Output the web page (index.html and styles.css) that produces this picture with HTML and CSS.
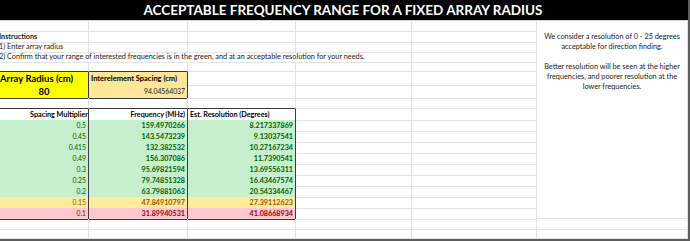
FILE: index.html
```html
<!DOCTYPE html>
<html>
<head>
<meta charset="utf-8">
<link rel="stylesheet" href="styles.css">
</head>
<body>
<div class="sheet">
  <div class="title">ACCEPTABLE FREQUENCY RANGE FOR A FIXED ARRAY RADIUS</div>
  <div class="body">
    <div class="left">
      <div class="row h11"><div class="c"></div><div class="c"></div><div class="c"></div><div class="c"></div><div class="c"></div></div>
      <div class="row h10"><div class="c txt b ind">Instructions</div><div class="c"></div><div class="c"></div><div class="c"></div><div class="c"></div></div>
      <div class="row h10"><div class="c txt ind">1) Enter array radius</div><div class="c"></div><div class="c"></div><div class="c"></div><div class="c"></div></div>
      <div class="row h10"><div class="c txt ind span4">2) Confirm that your range of interested frequencies is in the green, and at an acceptable resolution for your needs.</div><div class="c"></div></div>
      <div class="row h10"><div class="c bb"></div><div class="c bb"></div><div class="c"></div><div class="c"></div><div class="c"></div></div>
      <div class="row h13"><div class="c yel br radius-h">Array Radius (cm)</div><div class="c tan br inter-h">Interelement Spacing (cm)</div><div class="c"></div><div class="c"></div><div class="c"></div></div>
      <div class="row h13"><div class="c yel br bb radius-v">80</div><div class="c tan br bb inter-v">94.04564037</div><div class="c"></div><div class="c"></div><div class="c"></div></div>
      <div class="row h11"><div class="c bb"></div><div class="c bb"></div><div class="c bb"></div><div class="c"></div><div class="c"></div></div>
      <div class="row h11 head"><div class="c br num">Spacing Multiplier</div><div class="c br num">Frequency (MHz)</div><div class="c br lft">Est. Resolution (Degrees)</div><div class="c"></div><div class="c"></div></div>
      <div class="row h11 good"><div class="c br num n">0.5</div><div class="c br num">159.4970266</div><div class="c br num">8.217337869</div><div class="c"></div><div class="c"></div></div>
      <div class="row h11 good"><div class="c br num n">0.45</div><div class="c br num">143.5473239</div><div class="c br num">9.13037541</div><div class="c"></div><div class="c"></div></div>
      <div class="row h11 good"><div class="c br num n">0.415</div><div class="c br num">132.382532</div><div class="c br num">10.27167234</div><div class="c"></div><div class="c"></div></div>
      <div class="row h11 good"><div class="c br num n">0.49</div><div class="c br num">156.307086</div><div class="c br num">11.7390541</div><div class="c"></div><div class="c"></div></div>
      <div class="row h11 good"><div class="c br num n">0.3</div><div class="c br num">95.69821594</div><div class="c br num">13.69556311</div><div class="c"></div><div class="c"></div></div>
      <div class="row h11 good"><div class="c br num n">0.25</div><div class="c br num">79.74851328</div><div class="c br num">16.43467574</div><div class="c"></div><div class="c"></div></div>
      <div class="row h11 good"><div class="c br num n">0.2</div><div class="c br num">63.79881063</div><div class="c br num">20.54334467</div><div class="c"></div><div class="c"></div></div>
      <div class="row h11 warn"><div class="c br num n">0.15</div><div class="c br num">47.84910797</div><div class="c br num">27.39112623</div><div class="c"></div><div class="c"></div></div>
      <div class="row h11 bad"><div class="c br bb num n">0.1</div><div class="c br bb num">31.89940531</div><div class="c br bb num">41.08668934</div><div class="c"></div><div class="c"></div></div>
      <div class="row h11"><div class="c"></div><div class="c"></div><div class="c"></div><div class="c"></div><div class="c"></div></div>
      <div class="row h9"><div class="c"></div><div class="c"></div><div class="c"></div><div class="c"></div><div class="c"></div></div>
    </div>
    <div class="right">
      <div class="note">
        <p>We consider a resolution of 0 - 25 degrees<br>acceptable for direction finding.</p>
        <p>Better resolution will be seen at the higher<br>frequencies, and poorer resolution at the<br>lower frequencies.</p>
      </div>
      <div class="c h11"></div>
      <div class="c h9"></div>
    </div>
  </div>
</div>
</body>
</html>
```
FILE: styles.css
```css
* { box-sizing: border-box; }
html, body { margin: 0; padding: 0; background: #fff; }
body { font-family: "Lato", "Liberation Sans", sans-serif; color: #000; }

.sheet {
  width: 690px;
  border-right: 2px solid #5e5e5e;
  border-bottom: 2px solid #5e5e5e;
  overflow: hidden;
}
.title {
  height: 21px;
  background: #000;
  color: #fff;
  font-weight: 700;
  font-size: 13.5px;
  line-height: 21px;
  text-align: center;
  white-space: nowrap;
  border-bottom: 1px solid #d8d8d8;
  padding-right: 2px;
}
.body { display: flex; }
.left { width: 537px; display: flex; flex-direction: column; }
.right { width: 151px; display: flex; flex-direction: column; }

.row {
  display: grid;
  grid-template-columns: 89px 99px 108px 116px 125px;
}
.h9 { height: 9px; }
.h10 { height: 10px; }
.h11 { height: 11px; }
.h13 { height: 13px; }

.c {
  border-right: 1px solid #e3e3e3;
  border-bottom: 1px solid #e3e3e3;
  font-size: 7.2px;
  white-space: nowrap;
  overflow: visible;
  line-height: 10px;
}
.h11 > .c, .c.h11 { line-height: 11px; }
.h13 > .c { line-height: 13px; }
.txt { color: #1a1a1a; font-size: 7.3px; }
.txt.b { font-size: 7.2px; }
.b { font-weight: 700; }
.ind { padding-left: 0; margin-left: -1px; }
.span4 { grid-column: span 4; }

.c.br { border-right-color: #3c3c3c; }
.c.bb { border-bottom-color: #3c3c3c; }

.yel { background: #ffff00; }
.tan { background: #ffe699; }
.yel, .tan { border-bottom-color: transparent; }
.radius-h { font-size: 9.5px; font-weight: 700; padding-left: 0; }
.radius-v { font-size: 9.5px; font-weight: 700; text-align: center; }
.inter-h { font-size: 7.5px; font-weight: 700; padding-left: 2px; }
.inter-v { text-align: right; padding-right: 2px; color: #222; font-size: 6.8px; }

.head > .c { font-weight: 700; font-size: 7.2px; }
.num { text-align: right; padding-right: 2px; }
.head .num:first-child { padding-right: 0; }
.lft { text-align: left; padding-left: 2px; }

.good > .c:nth-child(-n+3) { background: #c6efce; border-bottom-color: transparent; color: #006100; font-weight: 700; }
.warn > .c:nth-child(-n+3) { background: #ffeb9c; border-bottom-color: transparent; color: #9c5700; font-weight: 700; }
.bad > .c:nth-child(-n+3) { background: #ffc7ce; color: #9c0006; font-weight: 700; }
.bad > .c.bb { border-bottom-color: #3c3c3c; }
.row > .c.n { font-weight: 400; font-size: 6.8px; }

.note {
  height: 198px;
  border-right: 1px solid #e3e3e3;
  border-bottom: 1px solid #e3e3e3;
  padding-top: 11px;
  text-align: center;
  font-size: 7.3px;
  line-height: 10px;
  color: #222;
}
.note p { margin: 0 0 10px 0; }
```
